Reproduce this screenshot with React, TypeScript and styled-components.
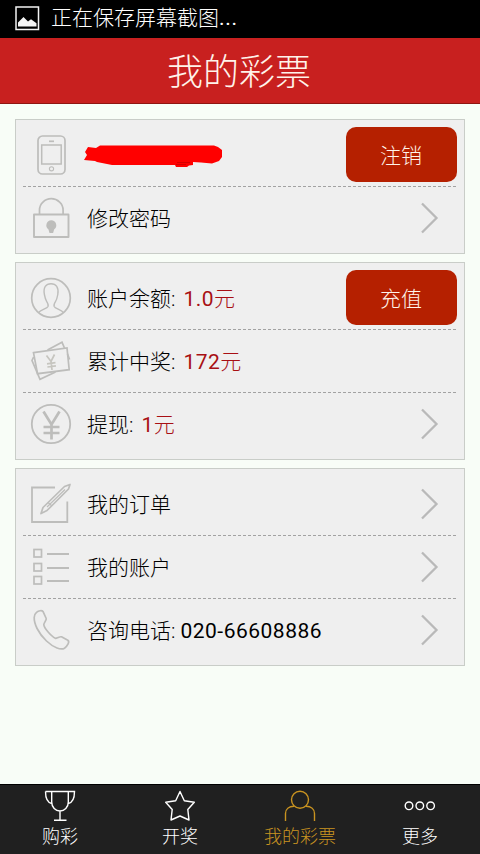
import React from "react";
import styled, { createGlobalStyle, css } from "styled-components";

const Global = createGlobalStyle`
  * { box-sizing: border-box; }
  body {
    margin: 0;
    background: #f8fdf7;
    font-family: Roboto, "Noto Sans CJK SC", sans-serif;
    font-weight: 300;
  }
`;

const Screen = styled.div`
  display: flex;
  flex-direction: column;
  width: 480px;
  height: 854px;
  overflow: hidden;
  background: #f8fdf7;
`;

const StatusBar = styled.div`
  display: flex;
  align-items: center;
  gap: 11px;
  height: 38px;
  padding: 0 0 2px 15px;
  background: #000;
  color: #fff;
  font-size: 21px;
  line-height: 36px;
`;

const Dots = styled.span`
  font-weight: 400;
  letter-spacing: 0.7px;
`;

const Header = styled.header`
  height: 66px;
  padding-right: 2px;
  background: #c8201f;
  border-bottom: 1px solid #8f1512;
  color: #fff3ea;
  font-size: 36px;
  line-height: 70px;
  text-align: center;
`;

const Content = styled.main`
  flex: 1;
  display: flex;
  flex-direction: column;
  gap: 8px;
  padding: 15px;
`;

const Card = styled.section`
  padding: 4px 7px 3px;
  background: #efefef;
  border: 1px solid #c9cdc8;
`;

const Row = styled.div`
  display: flex;
  align-items: center;
  height: 63px;
  padding-left: 6px;
  border-bottom: 1px solid transparent;

  &:not(:last-child) {
    border-bottom: 0;
    padding-bottom: 1px;
    background: repeating-linear-gradient(90deg, #a2a2a2 0 3px, transparent 3px 5px) left bottom / 100% 1px no-repeat;
  }
`;

const iconBox = css`
  flex: none;
  display: block;
  fill: none;
  stroke: #bdbdbb;
`;

const RowIcon = styled.svg.attrs({ width: 44, height: 44, viewBox: "0 0 44 44" })`
  ${iconBox}
  stroke-width: 1.7;
`;

const Label = styled.span`
  margin-left: 14px;
  padding-top: 2px;
  color: #000;
  font-size: 21px;
  line-height: 30px;
  white-space: pre;
`;

const Latin = styled.span`
  font-weight: 400;
  letter-spacing: 0.5px;
`;

const Value = styled.span<{ $gap: number; $red?: boolean }>`
  margin-left: ${(p) => p.$gap}px;
  padding-top: 2px;
  color: ${(p) => (p.$red ? "#a80f14" : "#000")};
  font-size: 21px;
  line-height: 30px;
`;

const Redaction = styled.svg.attrs({ width: 140, height: 24, viewBox: "0 0 140 24" })`
  margin: 2px 0 0 10px;
  display: block;
`;

const Button = styled.button`
  margin: 0 0 2px auto;
  width: 111px;
  height: 55px;
  padding: 0 1px 0 0;
  border: 0;
  border-radius: 10px;
  background: #b52000;
  color: #fff4ea;
  font: inherit;
  font-size: 21px;
`;

const Arrow = styled.svg.attrs({ width: 20, height: 34, viewBox: "0 0 20 34" })`
  ${iconBox}
  margin: 0 17px 0 auto;
  stroke: #b9b9b9;
  stroke-width: 2.3;
`;

const TabBar = styled.nav`
  display: grid;
  grid-template-columns: repeat(4, 1fr);
  height: 70px;
  background: #202020;
  border-top: 1px solid #000;
`;

const Tab = styled.div<{ $active?: boolean }>`
  display: flex;
  flex-direction: column;
  align-items: center;
  padding-top: 4px;
  color: ${(p) => (p.$active ? "#c99320" : "#fff")};
  font-size: 18px;
  line-height: 28px;
`;

const TabIcon = styled.svg.attrs({ width: 34, height: 34, viewBox: "0 0 34 34" })`
  ${iconBox}
  stroke: currentColor;
  stroke-width: 1.4;
`;

const ScreenshotIcon = styled.svg.attrs({ width: 25, height: 25, viewBox: "0 0 25 25" })`
  ${iconBox}
  stroke: #f4f4f4;
`;

const Chevron = () => (
  <Arrow>
    <path d="M2 2.5 L16.5 17 L2 31.5" />
  </Arrow>
);

const PhoneIcon = () => (
  <RowIcon>
    <rect x="9" y="3" width="27" height="38" rx="4.5" />
    <rect x="12.7" y="12" width="19.5" height="19" strokeWidth="1.5" />
    <path d="M20 8.3h5" />
    <circle cx="22.5" cy="35.8" r="2.1" strokeWidth="1.1" />
  </RowIcon>
);

const LockIcon = () => (
  <RowIcon>
    <rect x="5" y="18.5" width="34.5" height="22.5" strokeWidth="1.9" strokeLinejoin="round" />
    <path d="M10.5 18V14a11.8 11.3 0 0 1 23.6 0v4" />
    <path d="M22.3 24.3a5 5 0 0 1 2.8 9.1l-1 3.6h-3.6l-1-3.6a5 5 0 0 1 2.8-9.1z" fill="#bdbdbb" stroke="none" />
  </RowIcon>
);

const PersonIcon = () => (
  <RowIcon strokeLinejoin="round">
    <circle cx="22" cy="22" r="19.3" />
    <path
      d="M9.5 36.7C11.5 33.5 18 32.8 19 30.5c.6-1.6-.2-3.5-1.4-5.2-1.2-1.7-1.6-3.6-2.2-6.8C14 11.5 17 7.7 22 7.7s8 3.8 6.800 10.800c-.6 3.200-1 5.100-2.200 6.800-1.200 1.700-2 3.600-1.400 5.200 1 2.300 7.300 3 9.300 6.200"
      strokeWidth="1.4"
    />
  </RowIcon>
);

const CashIcon = () => (
  <RowIcon>
    <path d="M4.5 13.700L38 9L40.200 30.700L8.500 34.700Z" />
    <path d="M18.500 11L33 3.300L35.500 9M38.500 15L40.600 20.500M4.600 18L3 21.500L11 40.300L26.500 33" />
    <path d="M17.500 16.500l4.500 6 3.500-7M22 22l1 9M18 24.800l8.500-1.100M18.400 28l8.500-1.100" strokeWidth="1.7" stroke="#c6c5bf" />
  </RowIcon>
);

const YenIcon = () => (
  <RowIcon>
    <circle cx="22" cy="22" r="19.2" strokeWidth="1.8" />
    <path d="M14.5 9.500L22.500 22.500L30.500 9.500M22.500 22v15.500M14.5 25h16M14.5 31h16" strokeWidth="2.7" />
  </RowIcon>
);

const EditIcon = () => (
  <RowIcon>
    <path d="M26 5.500H3V40H38.300V19.500" strokeWidth="1.8" />
    <path d="M12 31.500L14 25.500L35.500 4.500L41 2.500L39.500 7L18 28.500Z" strokeLinejoin="round" />
    <path d="M19 20.500l4 3.500M18 25l18-17.500" strokeWidth="1.2" />
  </RowIcon>
);

const ListIcon = () => (
  <RowIcon>
    <rect x="5" y="4.500" width="7.500" height="7.500" />
    <rect x="5" y="18.500" width="7.500" height="7.500" />
    <rect x="5" y="31.500" width="7.500" height="7.500" />
    <path d="M18 9h22M18 23h22M18 36h22" strokeWidth="1.8" />
  </RowIcon>
);

const CallIcon = () => (
  <RowIcon strokeLinejoin="round">
    <path d="M7.500 4.300C9.500 2.600 13 2 14.200 3.800L17.200 10.500C17.800 12 15 14.500 14.800 16.500C14.800 20 22.500 28.500 26.300 30.300C28.500 30.300 30.500 28.300 32.500 28.800L38.800 32.300C41 33.800 38.500 38 35.500 40.200C32 42.300 25 40 17.500 33C9 25 5 15.500 5.200 9.500C5.200 7 6 5.500 7.500 4.300Z" />
  </RowIcon>
);

export default function App() {
  return (
    <Screen>
      <Global />
      <StatusBar>
        <ScreenshotIcon>
          <rect x="1" y="1" width="22.500" height="22.500" strokeWidth="1.5" />
          <path d="M3 20.500v-4l5.500-5.500 4.500 4.500 3-2.200 5.500 4v3.200z" fill="#f4f4f4" stroke="none" />
        </ScreenshotIcon>
        <span>正在保存屏幕截图<Dots>...</Dots></span>
      </StatusBar>
      <Header>我的彩票</Header>
      <Content>
        <Card>
          <Row>
            <PhoneIcon />
            <Redaction>
              <path
                d="M5 3L13 4L17 1.500H131L135 3L139 6V13L136 17L129 19.500L118 18.500L110 18V21L106 21.500L104 23H93L92 21H29L24 20L14 18L12 17L1 16L4 11L2 8Z"
                fill="#ff0000"
              />
              <path d="M94 18.500h13M93 20.500h10" stroke="#b80000" strokeWidth="0.6" />
            </Redaction>
            <Button>注销</Button>
          </Row>
          <Row>
            <LockIcon />
            <Label>修改密码</Label>
            <Chevron />
          </Row>
        </Card>
        <Card>
          <Row>
            <PersonIcon />
            <Label>账户余额:</Label>
            <Value $gap={8} $red><Latin>1.0</Latin>元</Value>
            <Button>充值</Button>
          </Row>
          <Row>
            <CashIcon />
            <Label>累计中奖:</Label>
            <Value $gap={8} $red><Latin>172</Latin>元</Value>
          </Row>
          <Row>
            <YenIcon />
            <Label>提现:</Label>
            <Value $gap={8} $red><Latin>1</Latin>元</Value>
            <Chevron />
          </Row>
        </Card>
        <Card>
          <Row>
            <EditIcon />
            <Label>我的订单</Label>
            <Chevron />
          </Row>
          <Row>
            <ListIcon />
            <Label>我的账户</Label>
            <Chevron />
          </Row>
          <Row>
            <CallIcon />
            <Label>咨询电话:</Label>
            <Value $gap={5}><Latin>020-66608886</Latin></Value>
            <Chevron />
          </Row>
        </Card>
      </Content>
      <TabBar>
        <Tab>
          <TabIcon>
            <path d="M2.500 2.500H31.500C31.500 8 30 13.500 25.300 14.500M2.500 2.500C2.500 8 4 13.500 8.700 14.500M8.700 2.500V13C8.700 18.500 12.500 22 17 22S25.300 18.500 25.300 13V2.500M17 22V31M11 31.300H23.500" />
          </TabIcon>
          购彩
        </Tab>
        <Tab>
          <TabIcon strokeLinejoin="round">
            <path d="M17 2.500L21.300 11.800L31.300 13.200L24.800 20.500L26 31L17 27L8 31L9.200 20.500L2.700 13.200L12.700 11.800Z" />
          </TabIcon>
          开奖
        </Tab>
        <Tab $active>
          <TabIcon>
            <circle cx="17" cy="10.800" r="8.500" />
            <path d="M2.500 32V24.500C2.500 20 6 17.200 11 17.200M31.500 32V24.500C31.500 20 28 17.200 23 17.200" />
          </TabIcon>
          我的彩票
        </Tab>
        <Tab>
          <TabIcon>
            <circle cx="6" cy="16.800" r="3.800" />
            <circle cx="16.800" cy="16.800" r="3.800" />
            <circle cx="27.600" cy="16.800" r="3.800" />
          </TabIcon>
          更多
        </Tab>
      </TabBar>
    </Screen>
  );
}
